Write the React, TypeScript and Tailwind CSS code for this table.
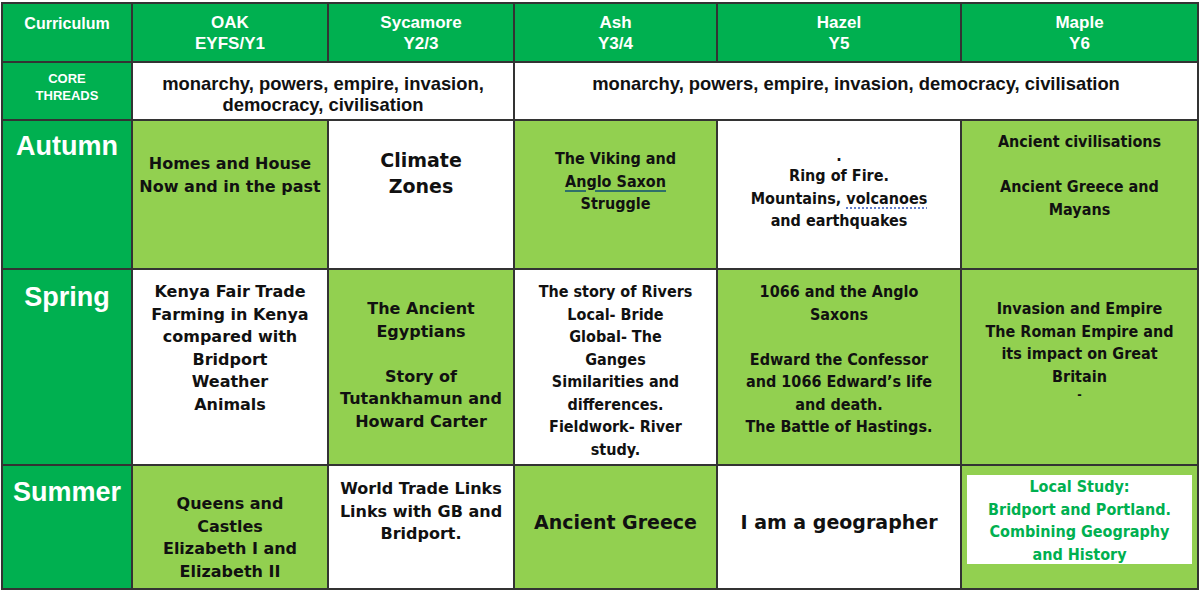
import React from 'react';

const head = "font-['Liberation_Sans',Arial,sans-serif] font-bold text-white";
const wide = "font-['DejaVu_Sans',sans-serif] font-bold text-[16px] leading-[22.5px] text-[#111]";
const narrow = "font-['DejaVu_Sans_Condensed','DejaVu_Sans',sans-serif] [font-stretch:condensed] font-bold text-[16px] leading-[22.5px] text-[#111]";
const big = "font-['DejaVu_Sans',sans-serif] font-bold text-[19px] leading-[26px] text-[#111]";
const core = "font-['Liberation_Sans',Arial,sans-serif] font-bold text-[18.4px] leading-[21px] text-[#111] pt-[10px]";

const dark = 'bg-[#00b050]';
const light = 'bg-[#92d050]';
const white = 'bg-white';

function Cell({ bg, className, children, colSpan }: { bg: string; className: string; children?: React.ReactNode; colSpan?: number }) {
  return (
    <td colSpan={colSpan} className={`${bg} border-2 border-[#333] align-top text-center p-0`}>
      <div className={className}>{children}</div>
    </td>
  );
}

function Season({ label, pt }: { label: string; pt: string }) {
  return (
    <Cell bg={dark} className={`${head} text-[27px] leading-[30px] text-[#e4f7e2] ${pt}`}>
      {label}
    </Cell>
  );
}

export default function App() {
  return (
    <div className="w-[1201px] h-[599px] bg-white pt-[2px] pl-[1px]">
      <table className="table-fixed border-collapse w-[1196px]">
        <colgroup>
          <col className="w-[130px]" />
          <col className="w-[196px]" />
          <col className="w-[186px]" />
          <col className="w-[203px]" />
          <col className="w-[244px]" />
          <col className="w-[237px]" />
        </colgroup>
        <tbody>
          <tr className="h-[59px]">
            <Cell bg={dark} className={`${head} text-[16px] leading-[20px] pt-[10px]`}>Curriculum</Cell>
            <Cell bg={dark} className={`${head} text-[17px] leading-[20.5px] pt-[9px]`}>OAK<br />EYFS/Y1</Cell>
            <Cell bg={dark} className={`${head} text-[17px] leading-[20.5px] pt-[9px]`}>Sycamore<br />Y2/3</Cell>
            <Cell bg={dark} className={`${head} text-[17px] leading-[20.5px] pt-[9px]`}>Ash<br />Y3/4</Cell>
            <Cell bg={dark} className={`${head} text-[17px] leading-[20.5px] pt-[9px]`}>Hazel<br />Y5</Cell>
            <Cell bg={dark} className={`${head} text-[17px] leading-[20.5px] pt-[9px]`}>Maple<br />Y6</Cell>
          </tr>
          <tr className="h-[58px]">
            <Cell bg={dark} className={`${head} text-[13px] leading-[17px] pt-[7px]`}>CORE<br />THREADS</Cell>
            <Cell colSpan={2} bg={white} className={core}>
              monarchy, powers, empire, invasion,<br />democracy, civilisation
            </Cell>
            <Cell colSpan={3} bg={white} className={core}>
              monarchy, powers, empire, invasion, democracy, civilisation
            </Cell>
          </tr>
          <tr className="h-[149px]">
            <Season label="Autumn" pt="pt-[10px]" />
            <Cell bg={light} className={`${wide} pt-[32px]`}>Homes and House<br />Now and in the past</Cell>
            <Cell bg={white} className={`${big} pt-[26px]`}>Climate<br />Zones</Cell>
            <Cell bg={light} className={`${narrow} pt-[27px]`}>
              The Viking and<br />
              <span className="underline decoration-[#2f6f6a] decoration-2 underline-offset-[3px]">Anglo Saxon</span><br />
              Struggle
            </Cell>
            <Cell bg={white} className={`${narrow} pt-[26px]`}>
              <div className="leading-[18px]">.</div>
              Ring of Fire.<br />
              Mountains, <span className="underline decoration-dotted decoration-[#3b5fc0] underline-offset-[4px]">volcanoes</span><br />
              and earthquakes
            </Cell>
            <Cell bg={light} className={`${narrow} pt-[10px]`}>
              Ancient civilisations<br /><br />Ancient Greece and<br />Mayans
            </Cell>
          </tr>
          <tr className="h-[196px]">
            <Season label="Spring" pt="pt-[12px]" />
            <Cell bg={white} className={`${wide} pt-[11px]`}>
              Kenya Fair Trade<br />Farming in Kenya<br />compared with<br />Bridport<br />Weather<br />Animals
            </Cell>
            <Cell bg={light} className={`${wide} pt-[28px]`}>
              The Ancient<br />Egyptians<br /><br />Story of<br />Tutankhamun and<br />Howard Carter
            </Cell>
            <Cell bg={white} className={`${narrow} pt-[11px]`}>
              The story of Rivers<br />Local- Bride<br />Global- The<br />Ganges<br />Similarities and<br />differences.<br />Fieldwork- River<br />study.
            </Cell>
            <Cell bg={light} className={`${narrow} pt-[11px]`}>
              1066 and the Anglo<br />Saxons<br /><br />Edward the Confessor<br />and 1066 Edward’s life<br />and death.<br />The Battle of Hastings.
            </Cell>
            <Cell bg={light} className={`${narrow} pt-[28px]`}>
              Invasion and Empire<br />The Roman Empire and<br />its impact on Great<br />Britain
              <div className="text-[12px] leading-[14px]">-</div>
            </Cell>
          </tr>
          <tr className="h-[124px]">
            <Season label="Summer" pt="pt-[11px]" />
            <Cell bg={light} className={`${wide} pt-[27px]`}>
              Queens and<br />Castles<br />Elizabeth I and<br />Elizabeth II
            </Cell>
            <Cell bg={white} className={`${wide} pt-[12px]`}>
              World Trade Links<br />Links with GB and<br />Bridport.
            </Cell>
            <Cell bg={light} className={`${big} pt-[43px]`}>Ancient Greece</Cell>
            <Cell bg={white} className={`${big} pt-[43px]`}>I am a geographer</Cell>
            <Cell bg={light} className="pt-[9px] px-[5px]">
              <div className={`${narrow} !text-[#00b050] bg-white h-[89px] pt-[1px]`}>
                Local Study:<br />Bridport and Portland.<br />Combining Geography<br />and History
              </div>
            </Cell>
          </tr>
        </tbody>
      </table>
    </div>
  );
}
